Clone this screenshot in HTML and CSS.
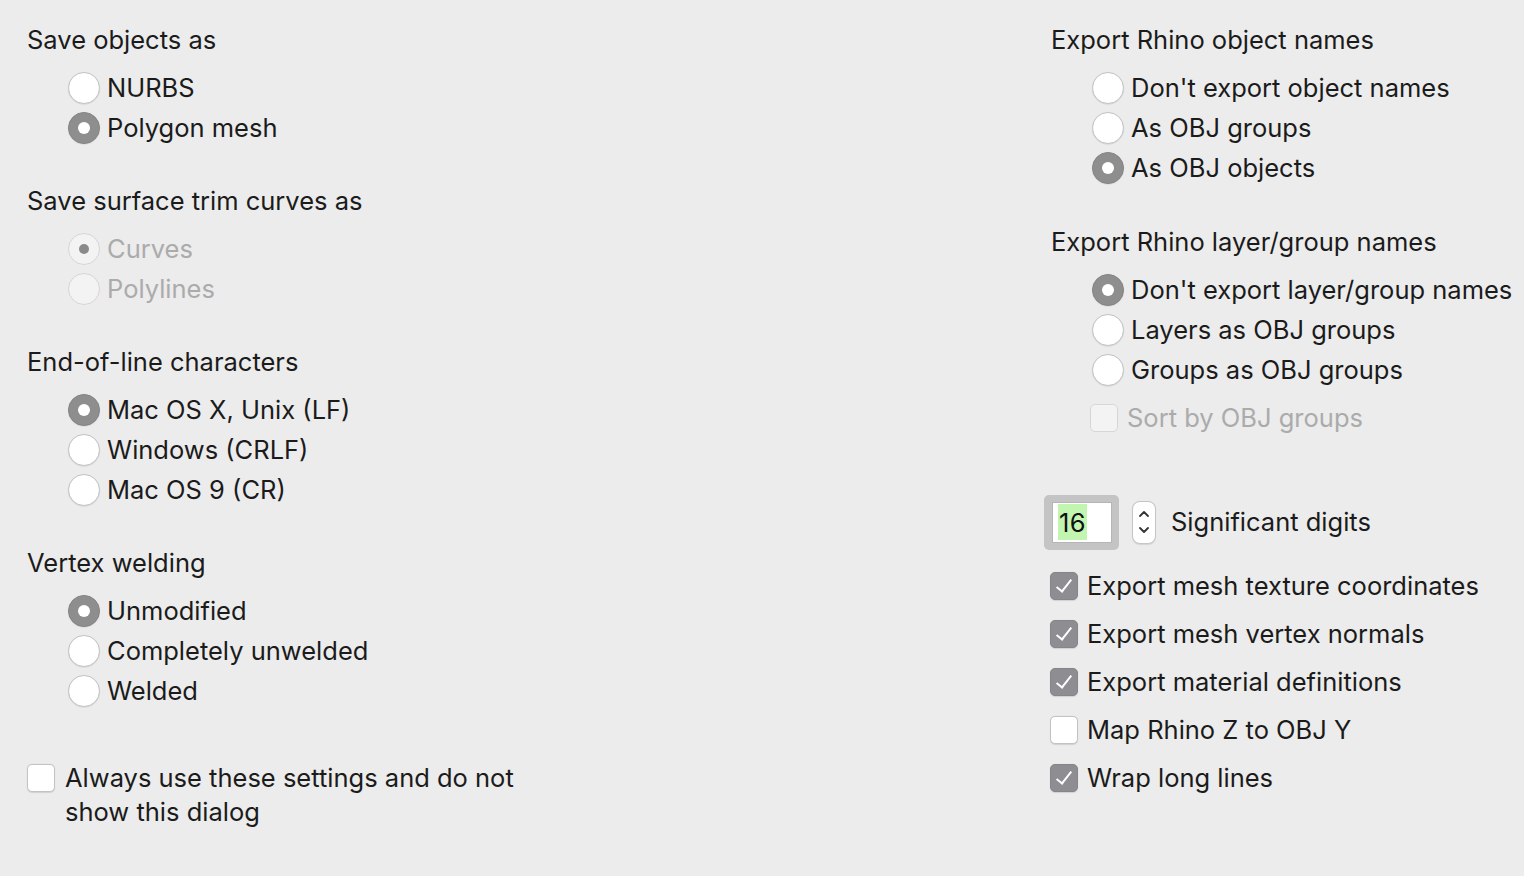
FILE: index.html
```html
<!DOCTYPE html>
<html>
<head>
<meta charset="utf-8">
<link rel="stylesheet" href="styles.css">
</head>
<body>
<div class="page">
  <div class="col left">
    <div class="section">
      <div class="heading">Save objects as</div>
      <div class="options">
        <div class="row"><span class="radio"></span><span>NURBS</span></div>
        <div class="row"><span class="radio on"></span><span>Polygon mesh</span></div>
      </div>
    </div>
    <div class="section">
      <div class="heading">Save surface trim curves as</div>
      <div class="options">
        <div class="row disabled"><span class="radio on"></span><span>Curves</span></div>
        <div class="row disabled"><span class="radio"></span><span>Polylines</span></div>
      </div>
    </div>
    <div class="section">
      <div class="heading">End-of-line characters</div>
      <div class="options">
        <div class="row"><span class="radio on"></span><span>Mac OS X, Unix (LF)</span></div>
        <div class="row"><span class="radio"></span><span>Windows (CRLF)</span></div>
        <div class="row"><span class="radio"></span><span>Mac OS 9 (CR)</span></div>
      </div>
    </div>
    <div class="section">
      <div class="heading">Vertex welding</div>
      <div class="options">
        <div class="row"><span class="radio on"></span><span>Unmodified</span></div>
        <div class="row"><span class="radio"></span><span>Completely unwelded</span></div>
        <div class="row"><span class="radio"></span><span>Welded</span></div>
      </div>
    </div>
    <div class="always">
      <span class="check"></span>
      <span class="always-text">Always use these settings and do not<br>show this dialog</span>
    </div>
  </div>
  <div class="col right">
    <div class="section">
      <div class="heading">Export Rhino object names</div>
      <div class="options">
        <div class="row"><span class="radio"></span><span>Don't export object names</span></div>
        <div class="row"><span class="radio"></span><span>As OBJ groups</span></div>
        <div class="row"><span class="radio on"></span><span>As OBJ objects</span></div>
      </div>
    </div>
    <div class="section s2">
      <div class="heading">Export Rhino layer/group names</div>
      <div class="options">
        <div class="row"><span class="radio on"></span><span>Don't export layer/group names</span></div>
        <div class="row"><span class="radio"></span><span>Layers as OBJ groups</span></div>
        <div class="row"><span class="radio"></span><span>Groups as OBJ groups</span></div>
        <div class="row sort disabled"><span class="check"></span><span>Sort by OBJ groups</span></div>
      </div>
    </div>
    <div class="digits">
      <div class="field-ring"><div class="field"><span class="sel">16</span></div></div>
      <div class="stepper">
        <svg width="12" height="34" viewBox="0 0 12 34"><path d="M2 11 L6 7 L10 11" fill="none" stroke="#333" stroke-width="1.8" stroke-linecap="round" stroke-linejoin="round"/><path d="M2 23 L6 27 L10 23" fill="none" stroke="#333" stroke-width="1.8" stroke-linecap="round" stroke-linejoin="round"/></svg>
      </div>
      <span class="digits-label">Significant digits</span>
    </div>
    <div class="checks">
      <div class="crow"><span class="check on"></span><span>Export mesh texture coordinates</span></div>
      <div class="crow"><span class="check on"></span><span>Export mesh vertex normals</span></div>
      <div class="crow"><span class="check on"></span><span>Export material definitions</span></div>
      <div class="crow"><span class="check"></span><span>Map Rhino Z to OBJ Y</span></div>
      <div class="crow"><span class="check on"></span><span>Wrap long lines</span></div>
    </div>
  </div>
</div>
</body>
</html>
```

FILE: styles.css
```css
html, body {
  margin: 0;
  padding: 0;
  background: #ececec;
}
body {
  width: 1524px;
  height: 876px;
  overflow: hidden;
  font-family: Inter, "Open Sans", "Liberation Sans", sans-serif;
  font-size: 25.5px;
  color: #1b1b1b;
}
.page {
  display: grid;
  grid-template-columns: 1024px 1fr;
  padding: 19px 0 0 27px;
}
.section {
  margin-bottom: 32px;
}
.heading {
  height: 40px;
  line-height: 41px;
  white-space: nowrap;
}
.options {
  margin-top: 9px;
  padding-left: 41px;
}
.row {
  height: 40px;
  line-height: 42px;
  display: flex;
  align-items: center;
  gap: 7px;
  white-space: nowrap;
}
.radio {
  width: 30px;
  height: 30px;
  border-radius: 50%;
  background: #fff;
  border: 1px solid #c3c3c3;
  box-shadow: 0 0.5px 1px rgba(0,0,0,0.12);
  flex: none;
  position: relative;
}
.radio.on {
  background: #8e8e8e;
  border-color: #858585;
}
.radio.on::after {
  content: "";
  position: absolute;
  left: 50%;
  top: 50%;
  width: 12px;
  height: 12px;
  margin: -6px 0 0 -6px;
  border-radius: 50%;
  background: #fff;
}
.disabled {
  color: #ababab;
}
.disabled .radio {
  background: #f3f3f3;
  border-color: #d6d6d6;
  box-shadow: none;
}
.disabled .radio.on::after {
  background: #8a8a8a;
  width: 10px;
  height: 10px;
  margin: -5px 0 0 -5px;
}
.check {
  width: 26px;
  height: 26px;
  border-radius: 5px;
  background: #fff;
  border: 1px solid #c3c3c3;
  box-shadow: 0 0.5px 1px rgba(0,0,0,0.12);
  flex: none;
  position: relative;
  box-sizing: content-box;
}
.check.on {
  background: #8e8e92;
  border-color: #86868a;
}
.check.on::after {
  content: "";
  position: absolute;
  left: 9px;
  top: 3px;
  width: 6px;
  height: 14px;
  border-right: 2.5px solid #fff;
  border-bottom: 2.5px solid #fff;
  transform: rotate(38deg);
}
.disabled .check {
  background: #f3f3f3;
  border-color: #d6d6d6;
  box-shadow: none;
}
.always {
  display: flex;
  align-items: flex-start;
  gap: 10px;
  margin-top: 50px;
}
.always .check {
  margin-top: 3px;
}
.always-text {
  line-height: 34px;
}
.right .section.s2 {
  margin-bottom: 0;
}
.right .section:first-child {
  margin-bottom: 33px;
}
.right .options {
  padding-left: 41px;
}
.row.sort {
  margin-top: 8px;
  margin-left: -2px;
  gap: 9px;
}
.digits {
  display: flex;
  align-items: center;
  margin-top: 56px;
  margin-left: -7px;
  height: 56px;
}
.field-ring {
  width: 75px;
  height: 55px;
  box-sizing: border-box;
  background: #c4c4c4;
  border-radius: 5px;
  padding: 7px 7px 7px 8px;
}
.field {
  height: 100%;
  background: #fff;
  box-shadow: inset 0 0 0 1px #b5b5b5;
  display: flex;
  align-items: center;
  padding-left: 6px;
}
.sel {
  background: #c2f5b0;
  color: #111;
  line-height: 34px;
  padding: 2px 1px 0;
  letter-spacing: 0.5px;
}
.stepper {
  margin-left: 13px;
  width: 22px;
  height: 41px;
  background: #fff;
  border: 1px solid #c6c6c6;
  border-radius: 8px;
  display: flex;
  align-items: center;
  justify-content: center;
  box-shadow: 0 0.5px 1px rgba(0,0,0,0.1);
}
.digits-label {
  margin-left: 15px;
  line-height: 44px;
}
.checks {
  margin-top: 12px;
  margin-left: -1px;
}
.crow {
  height: 48px;
  line-height: 50px;
  display: flex;
  align-items: center;
  gap: 9px;
  white-space: nowrap;
}
```
